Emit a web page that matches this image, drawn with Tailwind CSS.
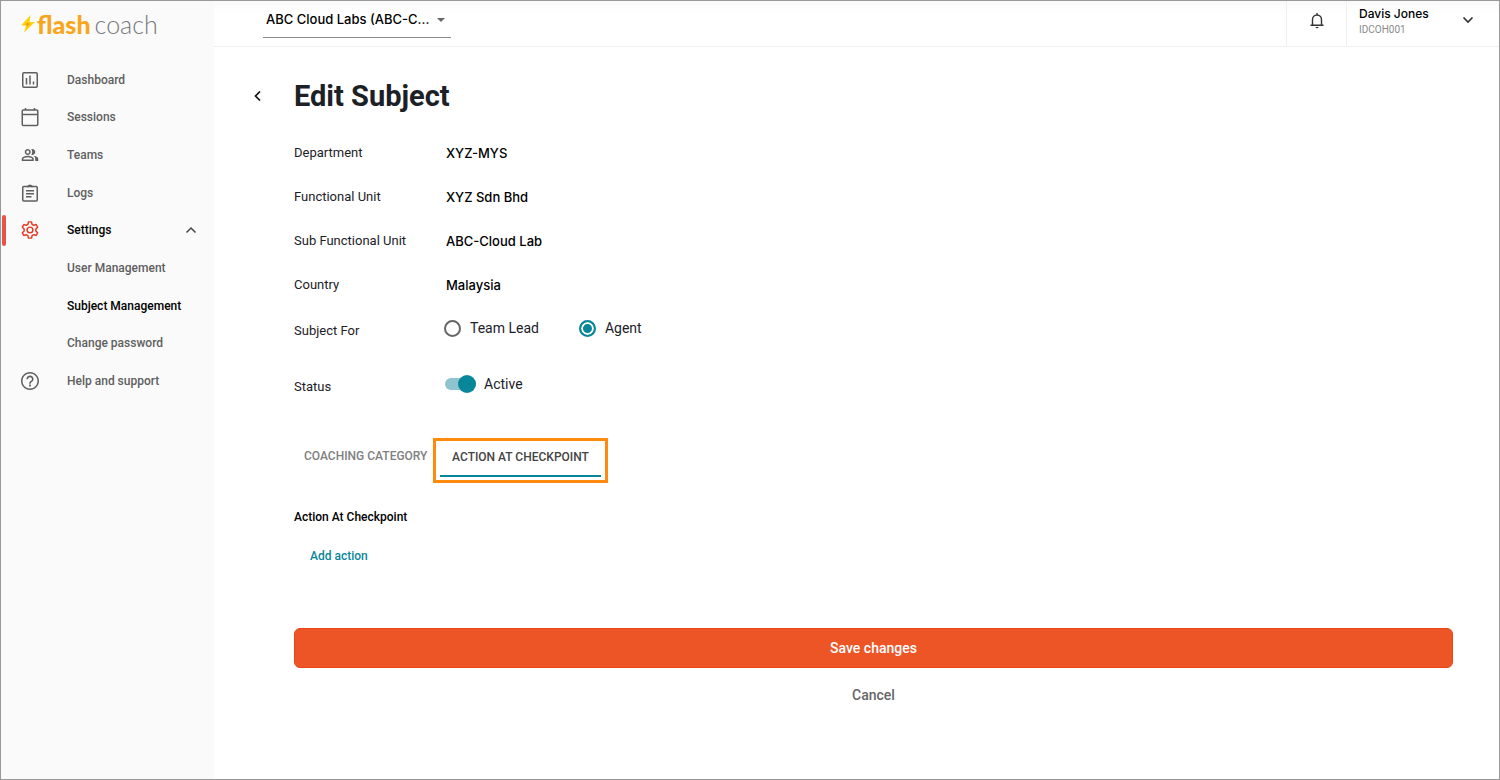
<!DOCTYPE html>
<html lang="en">
<head>
  <meta charset="UTF-8">
  <meta name="viewport" content="width=device-width, initial-scale=1.0">
  <title>Flash Coach - Edit Subject</title>
  <script src="https://cdn.jsdelivr.net/npm/@tailwindcss/browser@4"></script>
</head>
<body class="min-h-screen flex border border-[#999] bg-white font-['Roboto',sans-serif] text-sm text-[#1c2127]">

  <!-- Sidebar -->
  <aside class="w-[213px] shrink-0 bg-[#fafafa]">
    <a href="#" class="flex items-center h-[46px] pl-5 font-['Lato',sans-serif] text-[25px] leading-none">
      <svg class="w-[14px] h-[18px] mr-[2px]" viewBox="0 0 14 18">
        <path d="M9.500 0L0 10.500h5L3 17.500 14 7H8.500z" fill="#fdd20a"/>
        <path d="M6.500 7L4 10h2l-.5 2L10 8.500H7.500z" fill="#f7a01b"/>
      </svg>
      <span class="font-black text-[#f9a61a]">flash</span>
      <span class="font-light text-[#77787b] ml-1">coach</span>
    </a>

    <nav class="mt-[14px] h-[339px] grid auto-rows-fr text-xs font-medium text-[#5f5f5f]">
      <a href="#" class="flex items-center pl-5">
        <svg class="w-[18px] h-[18px] mr-7" viewBox="0 0 18 18" fill="none" stroke="currentColor" stroke-width="1.500">
          <rect x="1.750" y="1.750" width="14.500" height="14.500" rx="1.200"/>
          <path d="M5.500 7v6.500M9 4.500v9M12.500 10.500v3"/>
        </svg>
        Dashboard
      </a>
      <a href="#" class="flex items-center pl-5">
        <svg class="w-[18px] h-[20px] mr-7" viewBox="0 0 18 20" fill="none" stroke="currentColor" stroke-width="1.500">
          <rect x="1.250" y="3" width="15.500" height="15.500" rx="1"/>
          <path d="M1.250 7.500h15.500M4.500 1v2M13.500 1v2"/>
        </svg>
        Sessions
      </a>
      <a href="#" class="flex items-center pl-5">
        <svg class="w-[18px] h-[18px] mr-7" viewBox="0 1 24 22" fill="currentColor">
          <path d="M16.670 13.130C18.040 14.060 19 15.320 19 17v3h4v-3c0-2.180-3.570-3.470-6.330-3.870zM15 12c2.210 0 4-1.790 4-4s-1.790-4-4-4c-.47 0-.91.1-1.330.24C14.500 5.270 15 6.580 15 8s-.5 2.730-1.330 3.760c.42.14.86.24 1.330.24zM9 12c2.210 0 4-1.790 4-4s-1.790-4-4-4-4 1.790-4 4 1.790 4 4 4zm0-6c1.100 0 2 .9 2 2s-.9 2-2 2-2-.9-2-2 .9-2 2-2zM9 13c-2.670 0-8 1.340-8 4v3h16v-3c0-2.660-5.330-4-8-4zm6 5H3v-.99C3.200 16.290 6.300 15 9 15s5.800 1.290 6 2v1z"/>
        </svg>
        Teams
      </a>
      <a href="#" class="flex items-center pl-5">
        <svg class="w-[18px] h-[18px] mr-7" viewBox="0 0 18 18" fill="none" stroke="currentColor" stroke-width="1.500">
          <rect x="1.750" y="2.500" width="14.500" height="14.500" rx="1"/>
          <path d="M5 6.750h8M5 9.750h8M5 12.750h5.500"/>
          <path d="M6 2.500h1.300a1.800 1.800 0 0 1 3.400 0H12" />
        </svg>
        Logs
      </a>
      <a href="#" class="relative flex items-center pl-5 pr-[17px] text-black">
        <span class="absolute left-px inset-y-[3px] w-1 rounded-sm bg-[#e5534b]"></span>
        <svg class="w-[18px] h-[18px] mr-7 text-[#e8341f]" viewBox="2 2 20 20" fill="none" stroke="currentColor" stroke-width="1.600" stroke-linejoin="round">
          <path d="M10.300 3h3.400l.6 2.700 1.900 1.100 2.600-.9 1.700 3-2 1.900v2.400l2 1.900-1.700 3-2.600-.9-1.900 1.100-.6 2.700h-3.400l-.6-2.700-1.900-1.100-2.600.9-1.700-3 2-1.900v-2.400l-2-1.900 1.700-3 2.600.9 1.900-1.100z"/>
          <circle cx="12" cy="12" r="3.200"/>
        </svg>
        Settings
        <svg class="w-3 h-3 ml-auto text-[#444]" viewBox="0 0 12 12" fill="none" stroke="currentColor" stroke-width="1.500">
          <path d="M1.500 8.500L6 4l4.500 4.500"/>
        </svg>
      </a>
      <a href="#" class="flex items-center pl-[66px]">User Management</a>
      <a href="#" class="flex items-center pl-[66px] text-black">Subject Management</a>
      <a href="#" class="flex items-center pl-[66px]">Change password</a>
      <a href="#" class="flex items-center pl-5">
        <svg class="w-[18px] h-[18px] mr-7" viewBox="2 2 20 20" fill="currentColor">
          <path d="M11 18h2v-2h-2v2zm1-16C6.480 2 2 6.480 2 12s4.480 10 10 10 10-4.480 10-10S17.520 2 12 2zm0 18.300c-4.600 0-8.300-3.700-8.300-8.300S7.400 3.700 12 3.700s8.300 3.700 8.300 8.300-3.700 8.300-8.300 8.300zM12 6c-2.210 0-4 1.790-4 4h1.800c0-1.200 1-2.200 2.200-2.200s2.200 1 2.200 2.200c0 2-3.100 1.750-3.100 5h1.800c0-2.250 3.100-2.500 3.100-5 0-2.210-1.790-4-4-4z"/>
        </svg>
        Help and support
      </a>
    </nav>
  </aside>

  <div class="flex-1 min-w-0">
    <!-- Top bar -->
    <header class="flex h-[46px] border-b border-[#efefef] bg-linear-to-b from-[#fafafa] to-white to-30% font-['Inter',sans-serif] text-black">
      <div class="relative ml-[49px] w-[188px] h-[37px] border-b border-[#8c8c8c]">
        <select aria-label="Team" class="appearance-none w-full h-full pt-px pl-[3px] pr-4 text-[13px] font-medium outline-none">
          <option>ABC Cloud Labs (ABC-C...</option>
        </select>
        <svg class="absolute right-[6px] top-[17px] w-2 h-1 pointer-events-none" viewBox="0 0 8 4"><path d="M0 0h8L4 4z" fill="#666"/></svg>
      </div>
      <button aria-label="Notifications" class="ml-auto w-[61px] pb-[6px] flex items-center justify-center border-x border-[#efefef]">
        <svg class="w-[14px] h-[17px]" viewBox="0 0 14 17" fill="none" stroke="#333" stroke-width="1.400">
          <path d="M.5 13.300h13M2.500 13V7.500a4.500 4.500 0 0 1 9 0V13M7 3V1"/>
          <path d="M5.500 15a1.500 1.300 0 0 0 3 0z" fill="#333" stroke="none"/>
        </svg>
      </button>
      <button class="w-[152px] flex items-start pl-3 pr-[25px] text-left">
        <span class="pt-1">
          <span class="block text-xs leading-[18px] font-medium">Davis Jones</span>
          <span class="block font-['Roboto',sans-serif] text-[10px] leading-[14px] text-[#8a8a8a]">IDCOH001</span>
        </span>
        <svg class="w-3 h-3 ml-auto mt-[13px]" viewBox="0 0 12 12" fill="none" stroke="#333" stroke-width="1.700">
          <path d="M1.500 3.500L6 8l4.500-4.500"/>
        </svg>
      </button>
    </header>

    <main class="pl-20 pr-[46px]">
      <div class="relative flex items-center h-[84px] pt-[14px]">
        <button aria-label="Back" class="absolute -left-[42px] w-3 h-3 flex items-center justify-center">
          <svg class="w-[10px] h-[10px]" viewBox="0 0 10 10" fill="none" stroke="#111" stroke-width="1.700"><path d="M7 .5L2.500 5 7 9.500"/></svg>
        </button>
        <h1 class="text-[29px] leading-9 font-bold">Edit Subject</h1>
      </div>

      <form>
        <dl class="grid grid-cols-[152px_1fr] auto-rows-[44px] items-center text-[13px]">
          <dt>Department</dt>
          <dd class="font-['Inter',sans-serif] font-medium text-black">XYZ-MYS</dd>
          <dt>Functional Unit</dt>
          <dd class="font-['Inter',sans-serif] font-medium text-black">XYZ Sdn Bhd</dd>
          <dt>Sub Functional Unit</dt>
          <dd class="font-['Inter',sans-serif] font-medium text-black">ABC-Cloud Lab</dd>
          <dt>Country</dt>
          <dd class="font-['Inter',sans-serif] font-medium text-black">Malaysia</dd>
        </dl>

        <div role="radiogroup" aria-labelledby="subjectFor" class="flex items-center h-12">
          <span id="subjectFor" class="w-[150px] text-[13px]">Subject For</span>
          <label class="flex items-center gap-[9px] pb-[6px] mr-10">
            <input type="radio" name="subjectFor" class="appearance-none w-[17px] h-[17px] rounded-full border-2 border-[#666] checked:border-[#08879b] checked:bg-[#08879b] checked:shadow-[inset_0_0_0_2px_white]">
            Team Lead
          </label>
          <label class="flex items-center gap-[9px] pb-[6px]">
            <input type="radio" name="subjectFor" checked class="appearance-none w-[17px] h-[17px] rounded-full border-2 border-[#666] checked:border-[#08879b] checked:bg-[#08879b] checked:shadow-[inset_0_0_0_2px_white]">
            Agent
          </label>
        </div>

        <div class="flex items-center h-16">
          <span id="status" class="w-[151px] text-[13px]">Status</span>
          <label class="flex items-center gap-2 pb-[6px]">
            <input type="checkbox" role="switch" checked class="relative appearance-none w-[31px] h-3 rounded-full bg-[#ccc] checked:bg-[#8fc4ce] before:absolute before:-top-[3px] before:left-0 before:w-[18px] before:h-[18px] before:rounded-full before:bg-[#777] checked:before:left-[13px] checked:before:bg-[#08879b]">
            Active
          </label>
        </div>

        <!-- Tabs -->
        <div role="tablist" class="mt-[19px] flex items-start pl-[10px] text-xs font-medium">
          <button type="button" role="tab" class="w-[129px] h-9 text-left whitespace-nowrap text-[#808080]">COACHING CATEGORY</button>
          <div class="border-3 border-[#ff8a0d] px-1 pb-[3px]">
            <button type="button" role="tab" aria-selected="true" class="w-[161px] h-9 pb-[2px] whitespace-nowrap border-b-2 border-[#08879b] text-[#444]">ACTION AT CHECKPOINT</button>
          </div>
        </div>

        <h2 class="mt-[26px] text-xs leading-4 font-medium text-black">Action At Checkpoint</h2>
        <button type="button" class="block mt-[23px] ml-4 text-xs leading-4 font-medium text-[#08879b]">Add action</button>

        <button type="submit" class="block w-full h-10 mt-16 rounded-md border border-[#ea4714] bg-[#ed5527] text-white font-medium">Save changes</button>
        <button type="button" class="block w-full mt-[17px] font-medium text-[#666]">Cancel</button>
      </form>
    </main>
  </div>
</body>
</html>
